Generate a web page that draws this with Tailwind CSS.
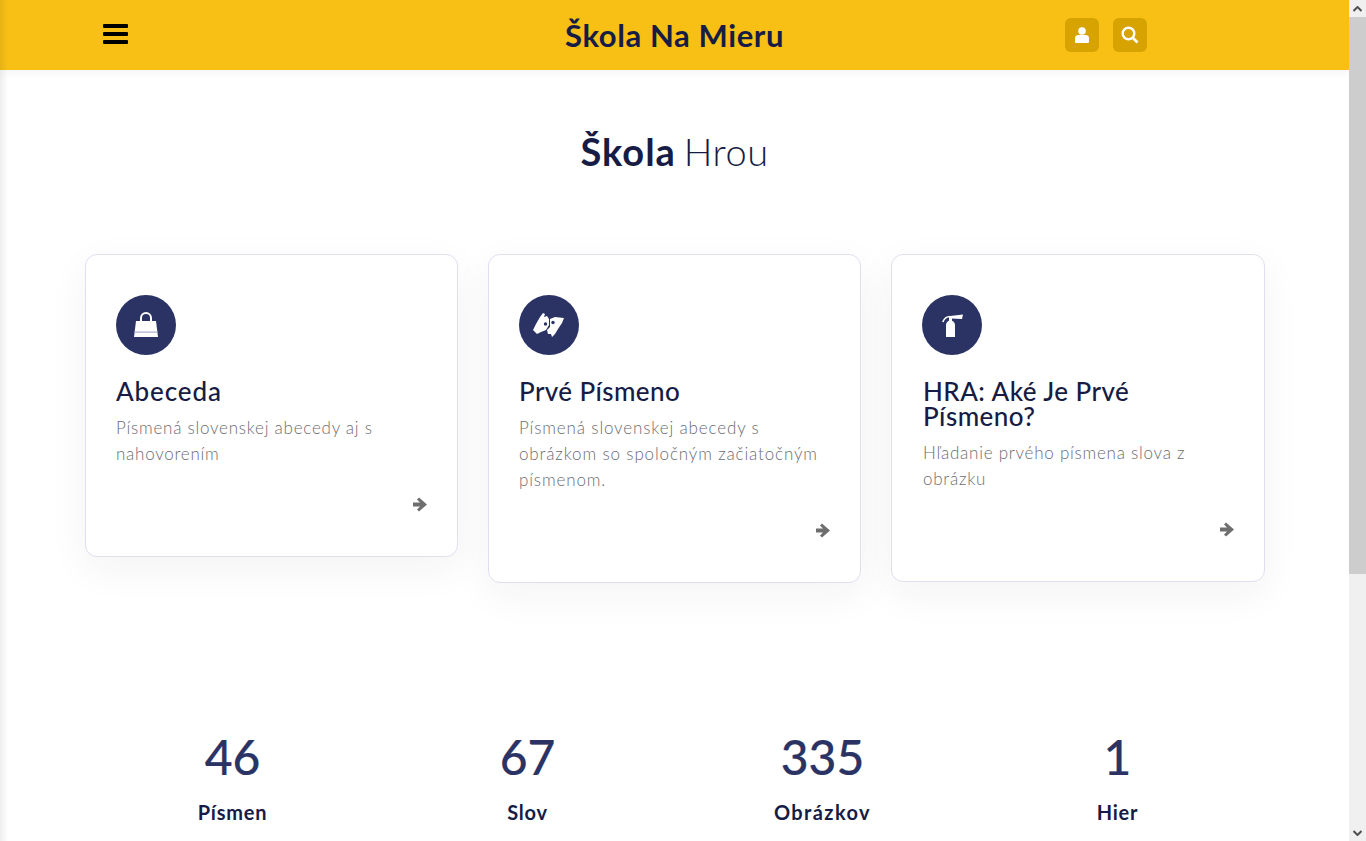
<!DOCTYPE html>
<html lang="sk">

<head>
    <meta charset="UTF-8">
    <meta name="viewport" content="width=device-width, initial-scale=1.0">
    <title>Škola Na Mieru</title>
    <script src="https://cdn.jsdelivr.net/npm/@tailwindcss/browser@4"></script>
</head>

<body class="h-[841px] overflow-hidden bg-white flex font-['Lato',sans-serif] text-[#161c45]">
    <div class="relative w-[1349px] h-[841px] overflow-hidden">
        <!-- left edge shade -->
        <div class="absolute left-0 top-0 bottom-0 w-[8px] bg-gradient-to-r from-black/[0.07] to-transparent z-10"></div>

        <header class="relative h-[70px] bg-[#f8c015] shadow-[0_2px_10px_rgba(0,0,0,0.05)] flex items-center justify-between pl-[103px] pr-[202px]">
            <svg class="w-[25px] h-[20px] -mt-[2px]" viewBox="0 0 25 20">
                <rect y="0" width="25" height="4" rx="1" />
                <rect y="8" width="25" height="4" rx="1" />
                <rect y="16" width="25" height="4" rx="1" />
            </svg>
            <div class="absolute left-[565px] top-[15px] text-[31px] leading-[40px] font-bold tracking-[0.6px]">Škola Na Mieru</div>
            <div class="flex gap-[14px]">
                <button class="w-[34px] h-[34px] rounded-md bg-[#d6a300] flex items-center justify-center">
                    <svg class="w-[14px] h-[16px]" viewBox="0 0 14 16" fill="#fff">
                        <circle cx="7" cy="4" r="3.8" />
                        <path d="M1 16 a1 1 0 0 1 -1 -1 V11 c0 -2 1.5 -3 3.5 -3 h7 c2 0 3.500 1 3.500 3 v4 a1 1 0 0 1 -1 1 z" />
                    </svg>
                </button>
                <button class="w-[34px] h-[34px] rounded-md bg-[#d6a300] flex items-center justify-center">
                    <svg class="w-[18px] h-[18px]" viewBox="0 0 18 18" fill="none" stroke="#fff">
                        <circle cx="7.500" cy="7.500" r="5.800" stroke-width="2.400" />
                        <path d="M12 12 L16.500 16.500" stroke-width="2.600" />
                    </svg>
                </button>
            </div>
        </header>

        <main class="px-[85px]">
            <h1 class="mt-[58px] h-[46px] text-center text-[38px] leading-[46px] font-light tracking-[0.5px] [word-spacing:-3px]"><span class="font-bold tracking-[1px]">Škola</span> Hrou</h1>

            <section class="mt-[80px] flex items-start gap-[30px] w-[1180px]">
                <article class="w-[373px] h-[303px] bg-white border border-[#e0dff0] rounded-xl shadow-[0_12px_40px_rgba(30,30,70,0.055)] pt-[40px] px-[30px] relative">
                    <div class="w-[60px] h-[60px] rounded-full bg-[#2a3364] flex items-center justify-center">
                        <svg class="w-[26px] h-[26px]" viewBox="0 0 26 26" fill="#fff">
                            <path d="M3 9 h20 l2 16 H1 z" />
                            <rect x="1.500" y="19.500" width="23" height="1.200" fill="#aab0cc" />
                            <path d="M8 11 V6 a5 5 0 0 1 10 0 v5" fill="none" stroke="#fff" stroke-width="2" />
                        </svg>
                    </div>
                    <h3 class="mt-[22px] text-[26px] leading-[28px] font-medium tracking-[0.9px]">Abeceda</h3>
                    <p class="mt-[10px] text-[17px] leading-[26px] font-light text-[#6c6c72] tracking-[0.75px]">Písmená slovenskej abecedy aj s nahovorením</p>
                    <svg class="absolute right-[30px] top-[242px] w-[14px] h-[15px]" viewBox="0 0 14 15" fill="#6e6e6e">
                        <path d="M0 5.500 h7 L4 2.500 L6 0.500 L14 7.500 L6 14.500 L4 12.500 L7 9.500 H0 z" />
                    </svg>
                </article>

                <article class="w-[373px] h-[329px] bg-white border border-[#e0dff0] rounded-xl shadow-[0_12px_40px_rgba(30,30,70,0.055)] pt-[40px] px-[30px] relative">
                    <div class="w-[60px] h-[60px] rounded-full bg-[#2a3364] flex items-center justify-center">
                        <svg class="w-[32px] h-[26px]" viewBox="0 0 32 26" fill="#fff">
                            <path d="M0 18 L3 12 L7 5 L10 1 L12 2 L11 5 L14 4 L16 7 L16 13 L13 18 L8 20 L4 22 z" />
                            <path d="M17 7 L22 5 L31 6 L29 11 L25 17 L22 22 L19 25 L18 22 L15 22 L14 18 L17 15 z" />
                            <circle cx="12.500" cy="12" r="1.700" fill="#2a3364" />
                            <circle cx="20" cy="10.500" r="1.700" fill="#2a3364" />
                        </svg>
                    </div>
                    <h3 class="mt-[22px] text-[26px] leading-[28px] font-medium tracking-[0.4px]">Prvé Písmeno</h3>
                    <p class="mt-[10px] text-[17px] leading-[26px] font-light text-[#6c6c72] tracking-[0.85px]">Písmená slovenskej abecedy s obrázkom so spoločným začiatočným písmenom.</p>
                    <svg class="absolute right-[30px] top-[268px] w-[14px] h-[15px]" viewBox="0 0 14 15" fill="#6e6e6e">
                        <path d="M0 5.500 h7 L4 2.500 L6 0.500 L14 7.500 L6 14.500 L4 12.500 L7 9.500 H0 z" />
                    </svg>
                </article>

                <article class="w-[374px] h-[328px] bg-white border border-[#e0dff0] rounded-xl shadow-[0_12px_40px_rgba(30,30,70,0.055)] pt-[40px] px-[30px] relative">
                    <div class="w-[60px] h-[60px] rounded-full bg-[#2a3364] flex items-center justify-center">
                        <svg class="w-[21px] h-[23px]" viewBox="0 0 21 23" fill="#fff">
                            <path d="M4 11 a4.500 4.500 0 0 1 9 0 V23 H4 z" />
                            <rect x="7" y="2" width="3" height="5" />
                            <path d="M8 2 L21 0.500 L20 5 L9 4.500 z" />
                            <path d="M8 2.500 C4.500 2.500 2 5 0.800 8" fill="none" stroke="#fff" stroke-width="1.600" />
                        </svg>
                    </div>
                    <h3 class="mt-[24px] ml-[1px] text-[26px] leading-[25px] font-medium tracking-[0.45px]">HRA: Aké Je Prvé Písmeno?</h3>
                    <p class="mt-[11px] ml-[1px] text-[17px] leading-[26px] font-light text-[#6c6c72] tracking-[0.75px]">Hľadanie prvého písmena slova z obrázku</p>
                    <svg class="absolute right-[30px] top-[267px] w-[14px] h-[15px]" viewBox="0 0 14 15" fill="#6e6e6e">
                        <path d="M0 5.500 h7 L4 2.500 L6 0.500 L14 7.500 L6 14.500 L4 12.500 L7 9.500 H0 z" />
                    </svg>
                </article>
            </section>

            <section class="absolute left-[85px] top-[730px] w-[1180px] grid grid-cols-4 text-center">
                <div>
                    <div class="text-[48px] leading-[54px] font-medium text-[#2a3364] [-webkit-text-stroke:0.2px_#2a3364]">46</div>
                    <div class="mt-[15px] text-[20px] leading-[26px] font-bold tracking-[0.8px]">Písmen</div>
                </div>
                <div>
                    <div class="text-[48px] leading-[54px] font-medium text-[#2a3364] [-webkit-text-stroke:0.2px_#2a3364]">67</div>
                    <div class="mt-[15px] text-[20px] leading-[26px] font-bold tracking-[0.8px]">Slov</div>
                </div>
                <div>
                    <div class="text-[48px] leading-[54px] font-medium text-[#2a3364] [-webkit-text-stroke:0.2px_#2a3364]">335</div>
                    <div class="mt-[15px] text-[20px] leading-[26px] font-bold tracking-[1.4px]">Obrázkov</div>
                </div>
                <div>
                    <div class="text-[48px] leading-[54px] font-medium text-[#2a3364] [-webkit-text-stroke:0.2px_#2a3364]">1</div>
                    <div class="mt-[15px] text-[20px] leading-[26px] font-bold tracking-[0.8px]">Hier</div>
                </div>
            </section>
        </main>
    </div>

    <!-- scrollbar -->
    <div class="w-[17px] h-[841px] bg-[#f0f0f0] flex flex-col">
        <div class="h-[17px] flex items-center justify-center">
            <svg class="w-[9px] h-[6px]" viewBox="0 0 9 6" fill="none" stroke="#505050" stroke-width="2"><path d="M0.500 5 L4.500 1 L8.500 5" /></svg>
        </div>
        <div class="h-[557px] bg-[#cdcdcd]"></div>
        <div class="flex-1"></div>
        <div class="h-[17px] flex items-center justify-center">
            <svg class="w-[9px] h-[6px]" viewBox="0 0 9 6" fill="none" stroke="#505050" stroke-width="2"><path d="M0.500 1 L4.500 5 L8.500 1" /></svg>
        </div>
    </div>
</body>

</html>
